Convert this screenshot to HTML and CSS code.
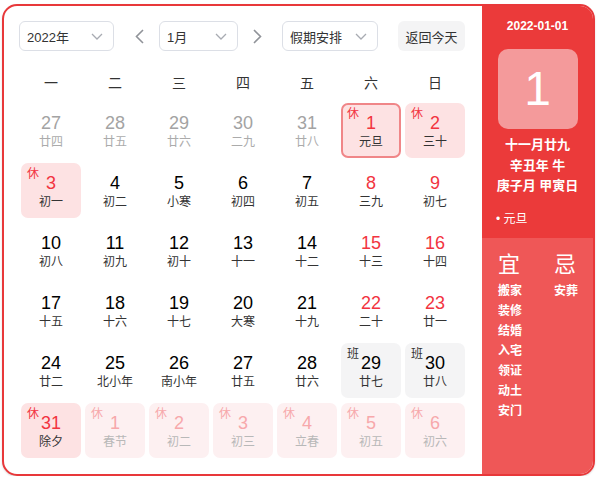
FILE: index.html
```html
<!DOCTYPE html>
<html lang="zh">
<head>
<meta charset="utf-8">
<link rel="stylesheet" href="styles.css">
</head>
<body>
<div class="cal">
  <div class="main">
    <div class="toolbar">
      <div class="select sel-year"><span>2022年</span><svg class="chev" width="12" height="7" viewBox="0 0 12 7"><polyline points="1,1 6,6 11,1" fill="none" stroke="#a8abb2" stroke-width="1.3"/></svg></div>
      <div class="arrow arrow-prev"><svg width="9" height="15" viewBox="0 0 9 15"><polyline points="8,1 1.5,7.5 8,14" fill="none" stroke="#909399" stroke-width="1.6"/></svg></div>
      <div class="select sel-month"><span>1月</span><svg class="chev" width="12" height="7" viewBox="0 0 12 7"><polyline points="1,1 6,6 11,1" fill="none" stroke="#a8abb2" stroke-width="1.3"/></svg></div>
      <div class="arrow arrow-next"><svg width="9" height="15" viewBox="0 0 9 15"><polyline points="1,1 7.5,7.5 1,14" fill="none" stroke="#909399" stroke-width="1.6"/></svg></div>
      <div class="select sel-holiday"><span>假期安排</span><svg class="chev" width="12" height="7" viewBox="0 0 12 7"><polyline points="1,1 6,6 11,1" fill="none" stroke="#a8abb2" stroke-width="1.3"/></svg></div>
      <div class="today-btn">返回今天</div>
    </div>
    <div class="weekdays">
      <span>一</span><span>二</span><span>三</span><span>四</span><span>五</span><span>六</span><span>日</span>
    </div>
    <div class="grid">
      <div class="cell other"><div class="num">27</div><div class="lunar">廿四</div></div>
      <div class="cell other"><div class="num">28</div><div class="lunar">廿五</div></div>
      <div class="cell other"><div class="num">29</div><div class="lunar">廿六</div></div>
      <div class="cell other"><div class="num">30</div><div class="lunar">二九</div></div>
      <div class="cell other"><div class="num">31</div><div class="lunar">廿八</div></div>
      <div class="cell rest selected"><span class="tag">休</span><div class="num red">1</div><div class="lunar">元旦</div></div>
      <div class="cell rest"><span class="tag">休</span><div class="num red">2</div><div class="lunar">三十</div></div>

      <div class="cell rest"><span class="tag">休</span><div class="num red">3</div><div class="lunar">初一</div></div>
      <div class="cell"><div class="num">4</div><div class="lunar">初二</div></div>
      <div class="cell"><div class="num">5</div><div class="lunar">小寒</div></div>
      <div class="cell"><div class="num">6</div><div class="lunar">初四</div></div>
      <div class="cell"><div class="num">7</div><div class="lunar">初五</div></div>
      <div class="cell"><div class="num red">8</div><div class="lunar">三九</div></div>
      <div class="cell"><div class="num red">9</div><div class="lunar">初七</div></div>

      <div class="cell"><div class="num">10</div><div class="lunar">初八</div></div>
      <div class="cell"><div class="num">11</div><div class="lunar">初九</div></div>
      <div class="cell"><div class="num">12</div><div class="lunar">初十</div></div>
      <div class="cell"><div class="num">13</div><div class="lunar">十一</div></div>
      <div class="cell"><div class="num">14</div><div class="lunar">十二</div></div>
      <div class="cell"><div class="num red">15</div><div class="lunar">十三</div></div>
      <div class="cell"><div class="num red">16</div><div class="lunar">十四</div></div>

      <div class="cell"><div class="num">17</div><div class="lunar">十五</div></div>
      <div class="cell"><div class="num">18</div><div class="lunar">十六</div></div>
      <div class="cell"><div class="num">19</div><div class="lunar">十七</div></div>
      <div class="cell"><div class="num">20</div><div class="lunar">大寒</div></div>
      <div class="cell"><div class="num">21</div><div class="lunar">十九</div></div>
      <div class="cell"><div class="num red">22</div><div class="lunar">二十</div></div>
      <div class="cell"><div class="num red">23</div><div class="lunar">廿一</div></div>

      <div class="cell"><div class="num">24</div><div class="lunar">廿二</div></div>
      <div class="cell"><div class="num">25</div><div class="lunar">北小年</div></div>
      <div class="cell"><div class="num">26</div><div class="lunar">南小年</div></div>
      <div class="cell"><div class="num">27</div><div class="lunar">廿五</div></div>
      <div class="cell"><div class="num">28</div><div class="lunar">廿六</div></div>
      <div class="cell work"><span class="tag">班</span><div class="num">29</div><div class="lunar">廿七</div></div>
      <div class="cell work"><span class="tag">班</span><div class="num">30</div><div class="lunar">廿八</div></div>

      <div class="cell rest"><span class="tag">休</span><div class="num red">31</div><div class="lunar">除夕</div></div>
      <div class="cell rest next"><span class="tag">休</span><div class="num">1</div><div class="lunar">春节</div></div>
      <div class="cell rest next"><span class="tag">休</span><div class="num">2</div><div class="lunar">初二</div></div>
      <div class="cell rest next"><span class="tag">休</span><div class="num">3</div><div class="lunar">初三</div></div>
      <div class="cell rest next"><span class="tag">休</span><div class="num">4</div><div class="lunar">立春</div></div>
      <div class="cell rest next"><span class="tag">休</span><div class="num">5</div><div class="lunar">初五</div></div>
      <div class="cell rest next"><span class="tag">休</span><div class="num">6</div><div class="lunar">初六</div></div>
    </div>
  </div>
  <div class="side">
    <div class="side-top">
      <div class="side-date">2022-01-01</div>
      <div class="big-day">1</div>
      <div class="lunar-info">
        <div>十一月廿九</div>
        <div>辛丑年 牛</div>
        <div>庚子月 甲寅日</div>
      </div>
      <div class="festival">• 元旦</div>
    </div>
    <div class="side-bottom">
      <div class="col col-good">
        <div class="col-title">宜</div>
        <div class="item">搬家</div>
        <div class="item">装修</div>
        <div class="item">结婚</div>
        <div class="item">入宅</div>
        <div class="item">领证</div>
        <div class="item">动土</div>
        <div class="item">安门</div>
      </div>
      <div class="col col-bad">
        <div class="col-title">忌</div>
        <div class="item">安葬</div>
      </div>
    </div>
  </div>
</div>
</body>
</html>
```

FILE: styles.css
```css
* { box-sizing: border-box; }
html, body { margin: 0; padding: 0; background: #fff; }
body {
  font-family: "Liberation Sans", "Noto Sans CJK SC", sans-serif;
  color: #333;
}
.cal {
  margin: 4px 0 0 2px;
  width: 593px;
  height: 472px;
  border: 2px solid #e8383a;
  border-radius: 15px;
  overflow: hidden;
  display: flex;
  background: #fff;
  box-shadow: 0 1px 2px rgba(0,0,0,0.15);
}
.main {
  width: 478px;
  flex-shrink: 0;
  padding: 15px 0 0 15px;
}
.toolbar {
  display: flex;
  align-items: center;
  height: 30px;
}
.select {
  height: 30px;
  border: 1px solid #dcdfe6;
  border-radius: 6px;
  display: flex;
  align-items: center;
  justify-content: space-between;
  padding: 0 10px 0 7px;
  font-size: 13px;
  color: #333;
}
.sel-year { width: 95px; }
.sel-month { width: 79px; }
.sel-holiday { width: 96px; }
.arrow { display: flex; align-items: center; height: 30px; width: 9px; }
.arrow-prev { margin: 0 15px 0 21px; }
.arrow-next { margin: 0 20px 0 15px; }
.today-btn {
  margin-left: 20px;
  width: 67px;
  height: 30px;
  background: #f4f4f5;
  border-radius: 6px;
  font-size: 13px;
  color: #333;
  display: flex;
  align-items: center;
  justify-content: center;
}
.weekdays {
  margin: 22px 0 0 2px;
  display: grid;
  grid-template-columns: repeat(7, 60px);
  column-gap: 4px;
  height: 20px;
  line-height: 20px;
  font-size: 14px;
  text-align: center;
  color: #333;
}
.grid {
  margin: 10px 0 0 2px;
  display: grid;
  grid-template-columns: repeat(7, 60px);
  grid-auto-rows: 55px;
  gap: 5px 4px;
}
.cell {
  position: relative;
  border-radius: 7px;
  padding-top: 9px;
  text-align: center;
}
.num {
  font-size: 18px;
  line-height: 22px;
  color: #000;
}
.lunar {
  font-size: 12px;
  line-height: 16px;
  color: #333;
}
.num.red { color: #f2343f; }
.other .num { color: #a3a3a3; }
.other .lunar { color: #ababab; }
.tag {
  position: absolute;
  left: 6px;
  top: 3px;
  font-size: 12px;
  line-height: 16px;
  color: #f2343f;
}
.rest { background: #fde2e3; }
.selected { border: 2px solid #f08688; padding-top: 7px; }
.selected .tag { left: 4px; top: 1px; }
.work { background: #f4f4f5; }
.work .tag { color: #333; }
.rest.next { background: #fdf0f1; }
.next .num, .next .tag { color: #f7a8ab; }
.next .lunar { color: #b8b8b8; }

.side {
  flex: 1;
  display: flex;
  flex-direction: column;
  color: #fff;
}
.side-top {
  background: #eb3a3a;
  height: 232px;
  padding-top: 12px;
}
.side-date {
  font-size: 12px;
  line-height: 16px;
  font-weight: bold;
  text-align: center;
}
.big-day {
  width: 80px;
  height: 80px;
  margin: 15px auto 0;
  background: #f49a9b;
  border-radius: 10px;
  font-size: 48px;
  line-height: 80px;
  text-align: center;
}
.lunar-info {
  margin-top: 6px;
  font-size: 13px;
  line-height: 20.5px;
  text-align: center;
  font-weight: bold;
}
.festival {
  margin: 12px 0 0 14px;
  font-size: 12px;
  line-height: 20px;
}
.side-bottom {
  flex: 1;
  background: #ef5757;
  display: flex;
  padding: 14px 0 0 16px;
}
.col-good { width: 56px; flex-shrink: 0; }
.col-bad { flex: 1; }
.col-title {
  font-size: 22px;
  line-height: 26px;
}
.item {
  margin-top: 3px;
  font-size: 12px;
  line-height: 20px;
  font-weight: bold;
}
.item + .item { margin-top: 0; }
```
